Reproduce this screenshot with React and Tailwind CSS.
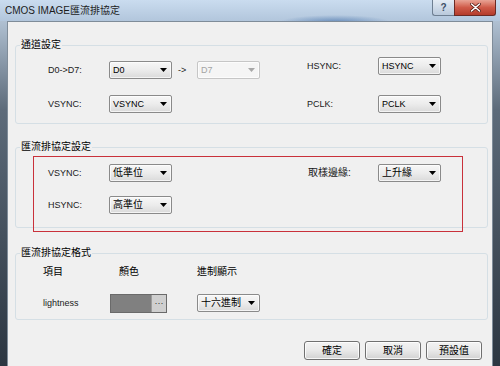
import React from 'react'

const FONT = "font-['Liberation_Sans','Noto_Sans_CJK_TC',sans-serif]"

function Arrow({ disabled }) {
  return (
    <svg width="7" height="4" viewBox="0 0 7 4" className="shrink-0">
      <path d="M0 0h7L3.5 4z" fill={disabled ? '#a8a8a8' : '#000'} />
    </svg>
  )
}

function Combo({ value, disabled, cjk }) {
  return (
    <div
      className={`w-[63px] h-[18px] shrink-0 flex items-center justify-between pl-[3px] pr-[4px] rounded-[2px] border shadow-[inset_0_0_0_1px_rgba(255,255,255,0.7)] ${
        disabled
          ? 'border-[#c6c6c6] bg-[#f5f5f5] text-[#a4a4a4]'
          : 'border-[#8a8a8a] bg-linear-to-b from-[#f7f7f7] via-[#ececec] to-[#dadada] text-black'
      }`}
    >
      <span className={`${cjk ? 'text-[10px]' : 'text-[9px]'} leading-none`}>{value}</span>
      <Arrow disabled={disabled} />
    </div>
  )
}

function Label({ children, w }) {
  return <span className={`${w} shrink-0 text-[9px] leading-none text-[#1a1a1a]`}>{children}</span>
}

function Group({ title, className, children }) {
  return (
    <div className={`relative ml-[7px] w-[473px] shrink-0 rounded-[3px] border border-[#d5dfe5] ${className}`}>
      <span className="absolute -top-[7px] left-[4px] bg-[#f0f0f0] px-[1px] text-[10px] leading-[12px] text-black">
        {title}
      </span>
      {children}
    </div>
  )
}

function Button({ children }) {
  return (
    <button className="w-[56px] h-[19px] rounded-[3px] border border-[#707070] bg-linear-to-b from-[#f3f3f3] via-[#e9e9e9] to-[#d2d2d2] shadow-[inset_0_0_0_1px_rgba(255,255,255,0.8)] text-[10px] leading-none text-black">
      {children}
    </button>
  )
}

export default function App() {
  return (
    <div
      className={`${FONT} w-[500px] h-[366px] overflow-hidden flex flex-col bg-linear-to-b from-[#c5d6e8] via-[#5d6b7a] via-30% to-[#2c3641]`}
    >
      {/* title bar */}
      <div className="h-[21px] shrink-0 flex bg-[radial-gradient(ellipse_55px_7px_at_335px_22px,rgba(45,95,160,0.55),transparent),linear-gradient(to_bottom,#cadcef,#b2c6dc)]">
        <span className="self-center pl-[5px] text-[10px] leading-none text-[#1c1c1c]">CMOS IMAGE匯流排協定</span>
        <div className="ml-auto mr-[4px] flex self-start">
          <div className="w-[22px] h-[16px] flex items-center justify-center rounded-bl-[3px] border border-t-0 border-r-0 border-[#6e7f92] bg-linear-to-b from-[#e3ebf4] to-[#b9c9dc] text-[10px] font-bold leading-none text-[#3d4f66]">
            ?
          </div>
          <div className="w-[42px] h-[16px] flex items-center justify-center rounded-br-[3px] border border-t-0 border-[#6b2a24] bg-linear-to-b from-[#e8a395] via-[#cf5a48] to-[#b33b2b]">
            <svg width="11" height="9" viewBox="0 0 11 9">
              <path d="M1.5 1l8 7M9.5 1l-8 7" stroke="#5a1d16" strokeWidth="3" strokeLinecap="round" />
              <path d="M1.5 1l8 7M9.5 1l-8 7" stroke="#fff" strokeWidth="1.6" strokeLinecap="round" />
            </svg>
          </div>
        </div>
      </div>

      {/* client area */}
      <div className="flex-1 mx-[7px] flex flex-col border border-b-0 border-[#7f8c99] bg-[#f0f0f0]">
        {/* 通道設定 */}
        <Group title="通道設定" className="mt-[23px] h-[79px] flex">
          <div className="w-[291px] pl-[32px] pt-[15px] flex flex-col gap-[16px]">
            <div className="flex items-center">
              <Label w="w-[61px]">D0-&gt;D7:</Label>
              <Combo value="D0" />
              <span className="w-[25px] pl-[6px] text-[9px] leading-none text-[#1a1a1a]">-&gt;</span>
              <Combo value="D7" disabled />
            </div>
            <div className="flex items-center">
              <Label w="w-[61px]">VSYNC:</Label>
              <Combo value="VSYNC" />
            </div>
          </div>
          <div className="pt-[11px] flex flex-col gap-[20px]">
            <div className="flex items-center">
              <Label w="w-[71px]">HSYNC:</Label>
              <Combo value="HSYNC" />
            </div>
            <div className="flex items-center">
              <Label w="w-[71px]">PCLK:</Label>
              <Combo value="PCLK" />
            </div>
          </div>
        </Group>

        {/* 匯流排協定設定 */}
        <Group title="匯流排協定設定" className="mt-[23px] h-[81px] flex">
          <div className="w-[291px] pl-[32px] pt-[16px] flex flex-col gap-[14px]">
            <div className="flex items-center">
              <Label w="w-[61px]">VSYNC:</Label>
              <Combo value="低準位" cjk />
            </div>
            <div className="flex items-center">
              <Label w="w-[61px]">HSYNC:</Label>
              <Combo value="高準位" cjk />
            </div>
          </div>
          <div className="pt-[16px] pl-[1px]">
            <div className="flex items-center">
              <span className="w-[70px] shrink-0 text-[10px] leading-none text-[#1a1a1a]">取樣邊緣:</span>
              <Combo value="上升緣" cjk />
            </div>
          </div>
          {/* annotation frame */}
          <div className="absolute left-[17px] top-[8px] w-[430px] h-[76px] border border-[#c9313b]" />
        </Group>

        {/* 匯流排協定格式 */}
        <Group title="匯流排協定格式" className="mt-[25px] h-[67px] pl-[27px] pt-[12px]">
          <div className="flex text-[10px] leading-[12px] text-black">
            <span className="w-[76px]">項目</span>
            <span className="w-[78px]">顏色</span>
            <span>進制顯示</span>
          </div>
          <div className="mt-[16px] flex items-start">
            <span className="w-[67px] pt-[5px] text-[9px] leading-none text-[#1a1a1a]">lightness</span>
            <div className="flex h-[19px] w-[57px] border border-[#6a6a6a]">
              <div className="flex-1 bg-[#808080]" />
              <div className="w-[15px] flex items-center justify-center border-l border-[#9c9c9c] bg-[#cfcfcf] text-[9px] leading-none text-[#333]">
                ···
              </div>
            </div>
            <div className="ml-[30px]">
              <Combo value="十六進制" cjk />
            </div>
          </div>
        </Group>

        {/* buttons */}
        <div className="mt-[21px] pr-[10px] flex justify-end gap-[5px]">
          <Button>確定</Button>
          <Button>取消</Button>
          <Button>預設值</Button>
        </div>
      </div>
    </div>
  )
}
